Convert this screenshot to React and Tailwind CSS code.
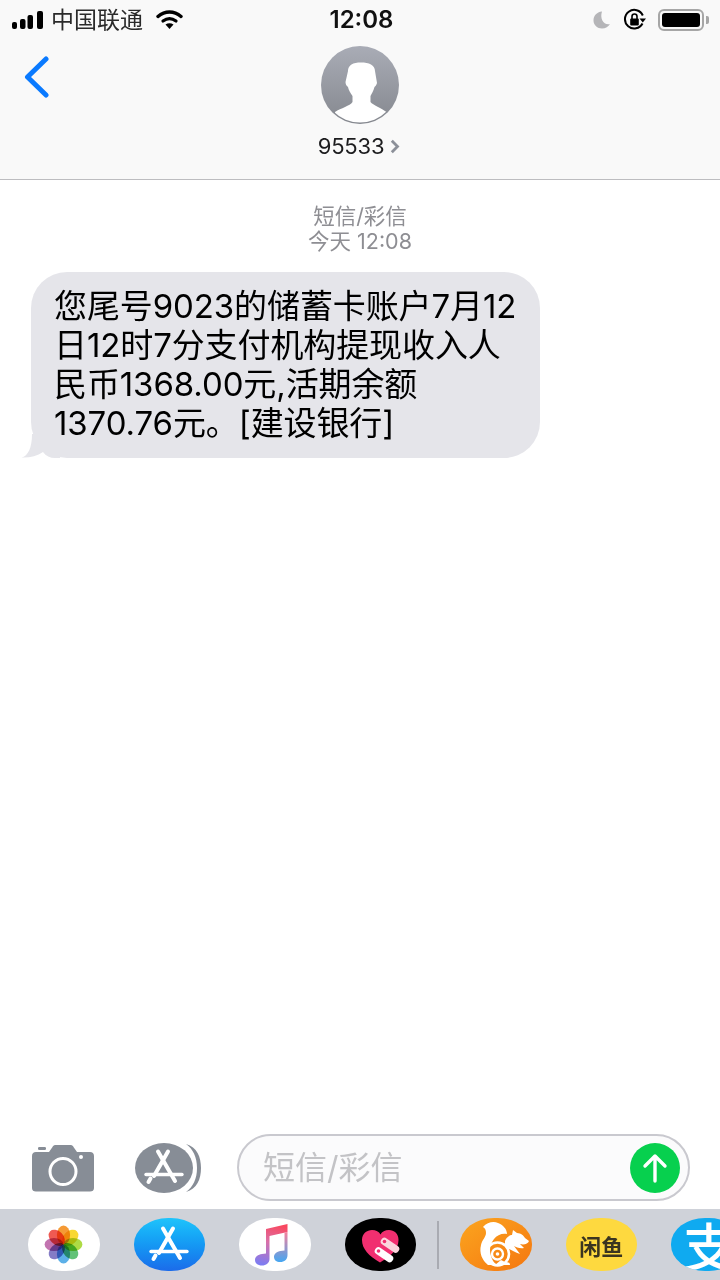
import React from "react";

const CJK = { fontFamily: 'Inter, "Noto Sans CJK SC", sans-serif' };

function AppGlyph({ stroke = "#fff" }) {
  return (
    <g stroke={stroke} strokeLinecap="round" fill="none">
      <path d="M39 10.5 L25 35" strokeWidth="4" />
      <path d="M29 10.5 L46 40" strokeWidth="4" />
      <path d="M17 33.5 H53" strokeWidth="3.4" />
      <path d="M19.5 41 L21.5 37.5" strokeWidth="4" />
    </g>
  );
}

function Photos() {
  const petals = [
    ["#f59a35", 0], ["#f8d832", 45], ["#aedb45", 90], ["#62c277", 135],
    ["#5cb0e8", 180], ["#847cc6", 225], ["#c274b0", 270], ["#ef5a52", 315],
  ];
  return (
    <svg width="71" height="53" viewBox="0 0 71 53">
      {petals.map(([c, a]) => (
        <ellipse key={a} className="mix-blend-multiply" cx="35.5" cy="17" rx="6.6" ry="9.4" fill={c} transform={`rotate(${a} 35.5 26.5)`} />
      ))}
    </svg>
  );
}

function Music() {
  return (
    <svg width="71" height="53" viewBox="0 0 71 53">
      <defs>
        <linearGradient id="mg" x1="0.6" y1="0" x2="0.4" y2="1">
          <stop offset="0" stopColor="#f9485f" />
          <stop offset="0.45" stopColor="#d970a8" />
          <stop offset="1" stopColor="#7f7cf0" />
        </linearGradient>
        <linearGradient id="mg2" x1="0" y1="0" x2="0" y2="1">
          <stop offset="0" stopColor="#f77f9b" />
          <stop offset="1" stopColor="#45a7f2" />
        </linearGradient>
      </defs>
      <path d="M27 11 L48.5 6 V14 L30.5 18 V41 C30.5 45 27 47.5 23 47.5 C18.5 47.5 16 45 16 42 C16 38.5 19 36.5 23 36 L27 35.5 Z" fill="url(#mg)" />
      <path d="M45.5 14.5 L48.5 14 V37 C48.5 41.5 45.5 44 41 44 C37.5 44 35 42 35 39 C35 35.5 38 33.5 41.5 33 L45.5 32.5 Z" fill="url(#mg2)" />
    </svg>
  );
}

function Heart() {
  return (
    <svg width="71" height="53" viewBox="0 0 71 53">
      <path d="M35 44.5 C24 38 17 31 17 22 C17 15.5 22 12 27 12 C31 12 34 13.5 35.5 16.5 C37 13.5 40 12 44 12 C49 12 53.5 15.5 53.5 22 C53.5 31 46 38 35 44.5 Z" fill="#f12f70" />
      <path d="M39.5 23.5 L50.5 31" stroke="#fbd5de" strokeWidth="7.5" strokeLinecap="round" />
      <path d="M33.5 33 L44.5 40.5" stroke="#fff" strokeWidth="7.5" strokeLinecap="round" />
      <circle cx="39.5" cy="23.5" r="1.8" fill="#f12f70" />
      <circle cx="33.5" cy="33" r="1.8" fill="#f12f70" />
    </svg>
  );
}

function Squirrel() {
  return (
    <svg width="71" height="53" viewBox="0 0 71 53">
      <path fill="#fff" d="M23 9 C27 4 34 3 38 5 C43 7 47 11 47 16 C42 15 37 17 34 21 C30 26 29 32 31 38 C32 42 34 45 37 47 L28 47 C22 42 19 35 21 27 C22 22 26 19 26 15 C26 12 25 10 23 9 Z" />
      <path fill="#fff" d="M45 23 C46 20 49 17 52 17 L53 12 L57 15 C61 15 64 18 65 20 L69 23 C68 26 64 27 60 26 L64 30 C60 31 56 29 54 28 L60 36 C54 34 49 30 45 29 Z" />
      <circle cx="37.5" cy="36" r="11.5" fill="none" stroke="#fff" strokeWidth="2.6" />
      <circle cx="37.5" cy="36" r="5.5" fill="none" stroke="#fff" strokeWidth="2.4" />
      <circle cx="37.5" cy="36" r="1.8" fill="#fff" />
      <path d="M35 47 H50 C50 44 47 44 45 44 L41 42 Z" fill="#fff" />
    </svg>
  );
}

function Pill({ className, children }) {
  return (
    <div className={`w-[71.5px] h-[53px] shrink-0 rounded-[34px/26px] flex items-center justify-center overflow-hidden ${className}`}>
      {children}
    </div>
  );
}

export default function App() {
  return (
    <div className="w-[720px] h-[1280px] flex flex-col bg-white overflow-hidden text-black" style={CJK}>
      {/* Header */}
      <header className="h-[180px] shrink-0 bg-[#f9f9f9] border-b border-[#bdbdc0]">
        <div className="h-[40px] grid grid-cols-[1fr_auto_1fr] items-center">
          <div className="flex items-center pl-[12px]">
            <svg width="32" height="20" viewBox="0 0 32 20">
              <rect x="0" y="12" width="5" height="7" rx="2" fill="#000" />
              <rect x="8" y="9" width="5.5" height="10" rx="2" fill="#000" />
              <rect x="15.5" y="5" width="5.5" height="14" rx="2" fill="#000" />
              <rect x="25" y="1" width="6" height="18" rx="2" fill="#000" />
            </svg>
            <span className="ml-[7px] text-[23px] leading-[28px] text-[#2a2a2a] whitespace-nowrap">中国联通</span>
            <svg className="ml-[13px]" width="27" height="20" viewBox="0 0 27 20">
              <path d="M2 6.5 C9 0.5 18 0.5 25 6.5" fill="none" stroke="#000" strokeWidth="3.4" strokeLinecap="round" />
              <path d="M7 11 C11 8 16 8 20 11" fill="none" stroke="#000" strokeWidth="3.2" strokeLinecap="round" />
              <path d="M9.5 14.5 C12 12.8 15 12.8 17.5 14.5 L13.5 19 Z" fill="#000" />
            </svg>
          </div>
          <div className="pl-[3px] text-[24px] leading-[28px] font-semibold text-[#111]">12:08</div>
          <div className="flex items-center justify-end pr-[11px]">
            <svg width="18" height="18" viewBox="0 0 18 18">
              <path d="M9 0.5 C3.5 1 0.5 5 0.5 9.5 C0.5 14 4.5 17.5 9 17.5 C12.5 17.5 15.5 15.5 17 13 C11 14.5 6.5 8 9 0.5 Z" fill="#b5b5b8" />
            </svg>
            <svg className="ml-[12px]" width="24" height="24" viewBox="0 0 24 24">
              <path d="M19.5 15.5 A9.3 9.3 0 1 1 19.8 7.5" fill="none" stroke="#000" strokeWidth="2" />
              <path d="M16.5 10.5 H23 L19.8 14.5 Z" fill="#000" />
              <rect x="7.2" y="10.5" width="8.6" height="7" rx="1" fill="#000" />
              <path d="M9 11 V8.5 A2.5 2.5 0 0 1 14 8.5 V11" fill="none" stroke="#000" strokeWidth="1.6" />
            </svg>
            <div className="ml-[11px] w-[46px] h-[22px] rounded-[6px] border-2 border-[#a6a6a6] p-[2px] shrink-0">
              <div className="w-full h-full rounded-[3px] bg-black" />
            </div>
            <div className="ml-[2px] w-[3px] h-[8px] rounded-r-[2px] bg-[#a6a6a6]" />
          </div>
        </div>
        <div className="grid grid-cols-[1fr_auto_1fr]">
          <div className="pl-[24px] pt-[16px]">
            <svg width="26" height="42" viewBox="0 0 26 42">
              <path d="M22 3 L3.5 21 L22 39" fill="none" stroke="#0a7aff" strokeWidth="5" strokeLinecap="round" strokeLinejoin="round" />
            </svg>
          </div>
          <div className="pt-[6px] flex flex-col items-center">
            <svg width="78" height="78" viewBox="0 0 78 78">
              <defs>
                <linearGradient id="av" x1="0" y1="0" x2="0" y2="1">
                  <stop offset="0" stopColor="#a9acb6" />
                  <stop offset="1" stopColor="#85888f" />
                </linearGradient>
                <clipPath id="avc"><circle cx="39" cy="39" r="37.5" /></clipPath>
              </defs>
              <circle cx="39" cy="39" r="39" fill="url(#av)" />
              <path clipPath="url(#avc)" fill="#fff" d="M27 25 C27 19 32 16.5 40 16.5 C48 16.5 54 19 54 25 L56 37 C55.5 39 54.5 40 53.5 41 C52.5 45 50.5 48 49.5 50 L49.5 56 C52 59 60 62 67 67 L67 80 L14 80 L14 66 C20 62 29 60 31.5 56 L31.5 50 C29.5 47 27.5 44 27 41 C25.5 40 24.5 38 24.5 36 Z" />
            </svg>
            <div className="mt-[9px] mr-[2px] flex items-center">
              <span className="text-[22px] leading-[27px] text-[#1c1c1e] tracking-[-0.2px]">95533</span>
              <svg className="ml-[6px]" width="10" height="15" viewBox="0 0 10 15">
                <path d="M1.8 1.8 L7.5 7.5 L1.8 13.2" fill="none" stroke="#8c9099" strokeWidth="2.8" />
              </svg>
            </div>
          </div>
          <div />
        </div>
      </header>

      {/* Messages */}
      <main className="flex-1 min-h-0">
        <div className="pt-[24px] flex flex-col items-center text-[21.5px] leading-[25px] text-[#8e8e93]">
          <div>短信/彩信</div>
          <div>今天 12:08</div>
        </div>
        <div className="relative mt-[18px] ml-[31px] w-[509px] h-[186px] rounded-[36px] bg-[#e5e5ea] pl-[23px] py-[15px] text-[33px] leading-[39px] text-black whitespace-nowrap tracking-[-0.1px]">
          <svg className="absolute left-[-11px] bottom-0" width="40" height="24" viewBox="0 0 40 24">
            <path d="M1.5 23.5 C8 22 12 14 12 0 L40 0 L40 24 L35 24 C30 24 26 22 23 18 C17 22 9 24 1.5 23.5 Z" fill="#e5e5ea" />
          </svg>
          <div className="relative">
            <div>您尾号9023的储蓄卡账户7月12</div>
            <div>日12时7分支付机构提现收入人</div>
            <div>民币1368.00元,活期余额</div>
            <div>1370.76元。[建设银行]</div>
          </div>
        </div>
      </main>

      {/* Input row */}
      <div className="h-[75px] shrink-0 flex items-center pl-[32px] pb-[8px]">
        <svg width="62" height="48" viewBox="0 0 62 48">
          <path fillRule="evenodd" fill="#878d96" d="M4 8 H17 L20.5 3 C21 1.5 22.5 1 24 1 H38 C39.5 1 41 1.5 41.5 3 L45 8 H58 C60.5 8 62 9.5 62 12 V44 C62 46.5 60.5 47.5 58 47.5 H4 C1.5 47.5 0 46.5 0 44 V12 C0 9.5 1.5 8 4 8 Z M31 13 A14.5 14.5 0 1 0 31 42 A14.5 14.5 0 1 0 31 13 Z M31 16 A11.5 11.5 0 1 1 31 39 A11.5 11.5 0 1 1 31 16 Z M49 11 A2 2 0 1 0 49 15 A2 2 0 1 0 49 11 Z" />
          <rect x="6" y="3" width="8" height="3" rx="1.2" fill="#878d96" />
        </svg>
        <svg className="ml-[41px]" width="69" height="50" viewBox="0 0 69 50">
          <ellipse cx="29" cy="25" rx="29" ry="25" fill="#878d96" />
          <path d="M51 1 C62 4 66 14 66 25 C66 36 62 46 51 49 C58 44 62 36 62 25 C62 14 58 6 51 1 Z" fill="#878d96" />
          <g transform="translate(-6 -2)"><AppGlyph /></g>
        </svg>
        <div className="ml-[33px] w-[453px] h-[67px] rounded-[34px] border-2 border-[#c9c9cf] bg-[#fbfbfc] flex items-center justify-between pl-[24px] pr-[8px]">
          <span className="text-[32px] leading-[38px] text-[#c3c3c6]">短信/彩信</span>
          <div className="w-[50px] h-[50px] rounded-full bg-[#07d04e] flex items-center justify-center">
            <svg width="26" height="32" viewBox="0 0 26 32">
              <path d="M13 29 V4 M3 14 L13 4 L23 14" fill="none" stroke="#fff" strokeWidth="3.4" strokeLinecap="round" strokeLinejoin="round" />
            </svg>
          </div>
        </div>
      </div>

      {/* Dock */}
      <div className="h-[71px] shrink-0 bg-[#cfd2d9] flex items-center pl-[28px] gap-[34px] overflow-hidden">
        <Pill className="bg-white"><Photos /></Pill>
        <Pill className="bg-gradient-to-b from-[#1fc4fb] to-[#1c6bea]">
          <svg width="71" height="53" viewBox="0 0 71 53"><AppGlyph /></svg>
        </Pill>
        <Pill className="bg-white"><Music /></Pill>
        <Pill className="bg-black"><Heart /></Pill>
        <div className="w-[2px] h-[48px] bg-[#a9abb2] shrink-0 -mx-[13px]" />
        <Pill className="bg-gradient-to-br from-[#fba51f] to-[#f4760f]"><Squirrel /></Pill>
        <Pill className="bg-[#fed93f]">
          <span className="text-[22px] leading-[28px] font-bold text-[#3b3520]" style={{ fontFamily: '"Noto Sans CJK SC", sans-serif' }}>闲鱼</span>
        </Pill>
        <Pill className="bg-[#0faaf0] justify-start pl-[12px]">
          <span className="text-[52px] leading-[53px] font-medium text-white" style={{ fontFamily: '"Noto Sans CJK SC", sans-serif' }}>支</span>
        </Pill>
      </div>
    </div>
  );
}
